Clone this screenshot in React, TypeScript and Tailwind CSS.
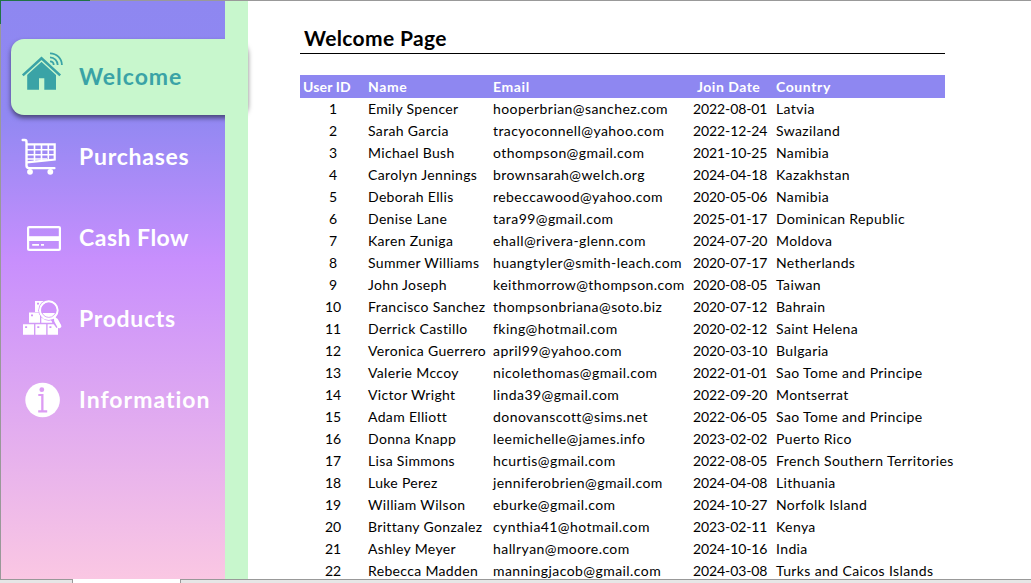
import type { ReactNode } from "react";

type User = [number, string, string, string, string];

const users: User[] = [
  [1, "Emily Spencer", "hooperbrian@sanchez.com", "2022-08-01", "Latvia"],
  [2, "Sarah Garcia", "tracyoconnell@yahoo.com", "2022-12-24", "Swaziland"],
  [3, "Michael Bush", "othompson@gmail.com", "2021-10-25", "Namibia"],
  [4, "Carolyn Jennings", "brownsarah@welch.org", "2024-04-18", "Kazakhstan"],
  [5, "Deborah Ellis", "rebeccawood@yahoo.com", "2020-05-06", "Namibia"],
  [6, "Denise Lane", "tara99@gmail.com", "2025-01-17", "Dominican Republic"],
  [7, "Karen Zuniga", "ehall@rivera-glenn.com", "2024-07-20", "Moldova"],
  [8, "Summer Williams", "huangtyler@smith-leach.com", "2020-07-17", "Netherlands"],
  [9, "John Joseph", "keithmorrow@thompson.com", "2020-08-05", "Taiwan"],
  [10, "Francisco Sanchez", "thompsonbriana@soto.biz", "2020-07-12", "Bahrain"],
  [11, "Derrick Castillo", "fking@hotmail.com", "2020-02-12", "Saint Helena"],
  [12, "Veronica Guerrero", "april99@yahoo.com", "2020-03-10", "Bulgaria"],
  [13, "Valerie Mccoy", "nicolethomas@gmail.com", "2022-01-01", "Sao Tome and Principe"],
  [14, "Victor Wright", "linda39@gmail.com", "2022-09-20", "Montserrat"],
  [15, "Adam Elliott", "donovanscott@sims.net", "2022-06-05", "Sao Tome and Principe"],
  [16, "Donna Knapp", "leemichelle@james.info", "2023-02-02", "Puerto Rico"],
  [17, "Lisa Simmons", "hcurtis@gmail.com", "2022-08-05", "French Southern Territories"],
  [18, "Luke Perez", "jenniferobrien@gmail.com", "2024-04-08", "Lithuania"],
  [19, "William Wilson", "eburke@gmail.com", "2024-10-27", "Norfolk Island"],
  [20, "Brittany Gonzalez", "cynthia41@hotmail.com", "2023-02-11", "Kenya"],
  [21, "Ashley Meyer", "hallryan@moore.com", "2024-10-16", "India"],
  [22, "Rebecca Madden", "manningjacob@gmail.com", "2024-03-08", "Turks and Caicos Islands"],
];

function HomeIcon() {
  return (
    <svg className="block" width="60" height="50" viewBox="0 0 60 50" fill="none">
      <path d="M12.2 27 26.5 13.7 41 27V44.8H29.3V33.3H24v11.5H12.2Z" fill="#3aa3a6" />
      <path d="M7.8 30.3 26.5 13.3 45.2 30.3" stroke="#c8f7cd" strokeWidth="5.2" />
      <path d="M7.8 30.3 26.5 13.3 45.2 30.3" stroke="#3aa3a6" strokeWidth="2.5" />
      <path d="M35 16.3a3.8 3.8 0 0 1 3.7 3.7M35 12.3a7.7 7.7 0 0 1 7.7 7.7M35 8.3a11.8 11.8 0 0 1 11.9 11.7" stroke="#3aa3a6" strokeWidth="1.8" />
    </svg>
  );
}

function CartIcon() {
  return (
    <svg className="block" width="60" height="50" viewBox="0 2 60 50" fill="none" stroke="white">
      <path d="M7.7 10h2.1c1.2 0 1.7.8 1.7 2v23.5c0 1.7.8 2.6 2.5 2.6h25.4" strokeWidth="2.4" strokeLinecap="round" />
      <path d="M12 14.3h27.7v15.3L12 32.4" strokeWidth="2.2" />
      <path d="M19.5 14v18M26.5 14v17M33.3 14v16M12 19.7h27M12 24.7h27M12 29h20" strokeWidth="1.6" />
      <circle cx="15" cy="41.8" r="2.9" fill="white" stroke="none" />
      <circle cx="35.3" cy="41.8" r="2.9" fill="white" stroke="none" />
    </svg>
  );
}

function CardIcon() {
  return (
    <svg className="block" width="60" height="50" viewBox="0 -2 60 50" fill="none" stroke="white">
      <rect x="13.1" y="12.1" width="31.8" height="22.8" rx="1" strokeWidth="2.2" />
      <path d="M13 23.6h32" strokeWidth="4.8" />
      <path d="M17.2 29.8H24M26 29.8h3" strokeWidth="1.7" />
    </svg>
  );
}

function BoxesIcon() {
  return (
    <svg className="block" width="60" height="50" viewBox="0 -1 60 50" fill="none">
      <path d="M20 6h11.5v11H20ZM14 17.5h11v10.3H14ZM26.3 17.5h11v10.3h-11ZM8 29.3h11v10.5H8ZM20.4 29.3h10.8v10.5H20.4ZM32.6 29.3H43v10.5H32.6Z" fill="white" />
      <path d="M22 7.8h2v1.7h-2ZM16 19.6h2v1.7h-2ZM10.1 31.3h2V33h-2ZM22.3 31.3h2V33h-2ZM34.4 31.3h2V33h-2Z" fill="#d094fa" />
      <circle cx="33.8" cy="15.2" r="10.5" fill="#cf93fb" />
      <path d="m38 22 6.3 9" stroke="#d094fa" strokeWidth="7" />
      <path d="M26.5 18h14v2.5l-5 3.8h-6.8Z" fill="white" />
      <circle cx="33.8" cy="15.2" r="8.8" stroke="white" strokeWidth="2.1" />
      <circle cx="33.8" cy="15.2" r="7.2" stroke="#d094fa" strokeWidth=".8" />
      <path d="m39.2 22.3 1.6 2.2" stroke="white" strokeWidth="2.4" />
      <path d="m41.2 25.5 3 5.5" stroke="white" strokeWidth="4.3" strokeLinecap="round" />
    </svg>
  );
}

function InfoIcon() {
  return (
    <svg className="block" width="60" height="50" viewBox="0 0 60 50">
      <circle cx="27.6" cy="25" r="17.3" fill="white" />
      <circle cx="26.8" cy="14.7" r="2.4" fill="#dc9cf3" />
      <path d="M23.3 19h5.2v16.3h3.7v2.2h-9v-2.2h3V21h-2.9Z" fill="#dc9cf3" />
    </svg>
  );
}

function MenuItem({ icon, label, tracking }: { icon: ReactNode; label: string; tracking: string }) {
  return (
    <a className="flex h-[81px] items-start pt-[15px] pl-[14px]">
      <span className="w-[64px] shrink-0">{icon}</span>
      <span className={`mt-[10px] text-[23px] leading-7 font-bold whitespace-nowrap text-white ${tracking}`}>{label}</span>
    </a>
  );
}

const columns = "grid grid-cols-[66px_125px_198px_85px_171px]";

export default function App() {
  return (
    <div className="flex h-[583px] w-[1031px] flex-col overflow-hidden bg-white font-['Lato',sans-serif] text-black">
      <div className="flex h-px shrink-0 bg-[#999999]">
        <div className="w-[90px] bg-[#217346]" />
      </div>
      <div className="flex h-[578px] shrink-0">
        <div className="w-px shrink-0 bg-[#999999]">
          <div className="h-[23px] bg-[#217346]" />
        </div>
        <nav className="w-[224px] shrink-0 bg-[linear-gradient(to_bottom,#8e87f1_0%,#9188f2_20%,#c88ffd_45%,#fac7e3_100%)] pt-[38px]">
          <a className="ml-[10px] flex h-[76px] w-[237px] items-start rounded-[13px] bg-[#c8f7cd] pt-[6px] pl-1 shadow-[0_3px_5px_rgba(0,0,0,0.5)]">
            <span className="w-[64px] shrink-0"><HomeIcon /></span>
            <span className="mt-[17px] text-[23px] leading-7 font-bold tracking-[1px] text-[#3aa3a6]">Welcome</span>
          </a>
          <div className="pt-[2px]">
            <MenuItem icon={<CartIcon />} label="Purchases" tracking="tracking-[0.75px]" />
            <MenuItem icon={<CardIcon />} label="Cash Flow" tracking="tracking-[0.5px]" />
            <MenuItem icon={<BoxesIcon />} label="Products" tracking="tracking-[0.7px]" />
            <MenuItem icon={<InfoIcon />} label="Information" tracking="tracking-[1px]" />
          </div>
        </nav>
        <div className="relative z-10 w-[23px] shrink-0 bg-[#c8f7cd]" />
        <main className="h-full min-w-0 flex-1 overflow-hidden pl-[52px]">
          <h1 className="h-[53px] w-[645px] border-b border-black pt-[23px] pl-1 text-[21px] leading-7 font-bold tracking-[0.35px]">Welcome Page</h1>
          <div className="mt-[21px] w-[645px] text-[14px] whitespace-nowrap">
            <div className={`${columns} h-[23px] bg-[#8e87f1] leading-6 font-bold text-white`}>
              <span className="pl-[3px] tracking-[0.15px]">User ID</span>
              <span className="pl-[2px] tracking-[0.6px]">Name</span>
              <span className="pl-[2px] tracking-[0.6px]">Email</span>
              <span className="pl-[8px] tracking-[0.5px]">Join Date</span>
              <span className="pl-[2px] tracking-[0.6px]">Country</span>
            </div>
            {users.map(([id, name, email, date, country]) => (
              <div key={id} className={`${columns} h-[22px] leading-[22px]`}>
                <span className="text-center">{id}</span>
                <span className="pl-[2px] tracking-[0.34px]">{name}</span>
                <span className="pl-[2px] tracking-[0.43px]">{email}</span>
                <span className="pl-[4px] tracking-[-0.1px]">{date}</span>
                <span className="pl-[2px] tracking-[0.38px]">{country}</span>
              </div>
            ))}
          </div>
        </main>
      </div>
      <footer className="flex h-1 shrink-0">
        <div className="w-[73px] border-t border-r border-[#999999] bg-[#e6e6e6]" />
        <div className="w-[107px] bg-white" />
        <div className="flex-1 border-t border-l border-[#999999] bg-[#e6e6e6]" />
      </footer>
    </div>
  );
}
